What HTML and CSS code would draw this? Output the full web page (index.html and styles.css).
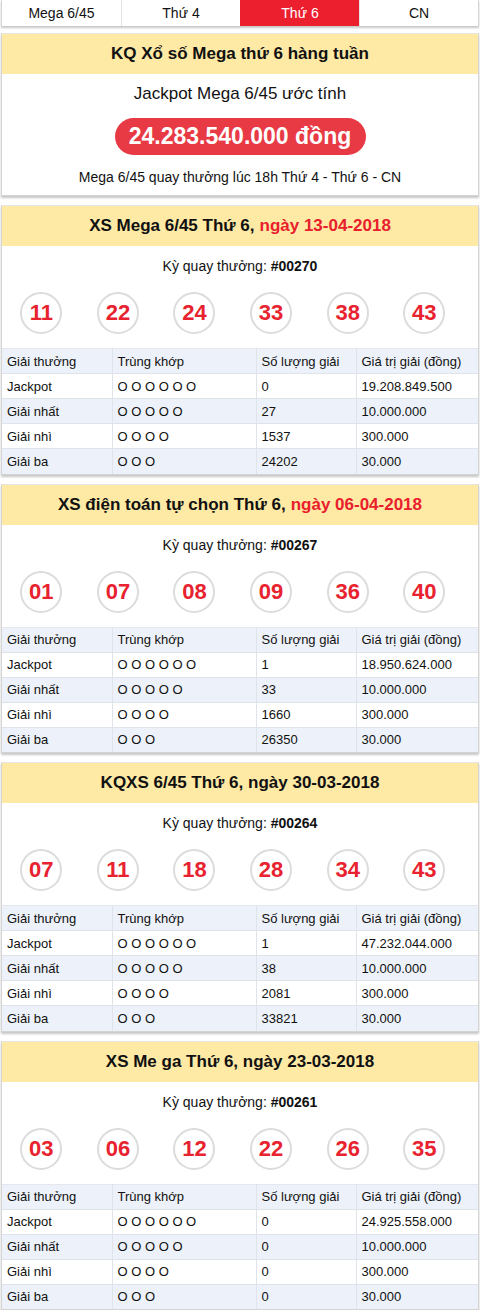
FILE: index.html
```html
<!DOCTYPE html>
<html lang="vi">
<head>
<meta charset="utf-8">
<title>Mega 6/45 Thứ 6</title>
<link rel="stylesheet" href="styles.css">
</head>
<body>
<nav class="tabs">
  <a class="tab">Mega 6/45</a>
  <a class="tab">Thứ 4</a>
  <a class="tab active">Thứ 6</a>
  <a class="tab">CN</a>
</nav>

<section class="card">
  <h2 class="card-title">KQ Xổ số Mega thứ 6 hàng tuần</h2>
  <div class="jackpot">
    <p class="jp-label">Jackpot Mega 6/45 ước tính</p>
    <div class="jp-pill">24.283.540.000 đồng</div>
    <p class="jp-note">Mega 6/45 quay thưởng lúc 18h Thứ 4 - Thứ 6 - CN</p>
  </div>
</section>

<section class="card">
  <h2 class="card-title">XS Mega 6/45 Thứ 6, <span class="date">ngày 13-04-2018</span></h2>
  <p class="draw">Kỳ quay thưởng: <b>#00270</b></p>
  <ul class="balls"><li>11</li><li>22</li><li>24</li><li>33</li><li>38</li><li>43</li></ul>
  <table class="prizes">
    <tr><th>Giải thưởng</th><th>Trùng khớp</th><th>Số lượng giải</th><th>Giá trị giải (đồng)</th></tr>
    <tr><td>Jackpot</td><td>O O O O O O</td><td>0</td><td>19.208.849.500</td></tr>
    <tr><td>Giải nhất</td><td>O O O O O</td><td>27</td><td>10.000.000</td></tr>
    <tr><td>Giải nhì</td><td>O O O O</td><td>1537</td><td>300.000</td></tr>
    <tr><td>Giải ba</td><td>O O O</td><td>24202</td><td>30.000</td></tr>
  </table>
</section>

<section class="card">
  <h2 class="card-title">XS điện toán tự chọn Thứ 6, <span class="date">ngày 06-04-2018</span></h2>
  <p class="draw">Kỳ quay thưởng: <b>#00267</b></p>
  <ul class="balls"><li>01</li><li>07</li><li>08</li><li>09</li><li>36</li><li>40</li></ul>
  <table class="prizes">
    <tr><th>Giải thưởng</th><th>Trùng khớp</th><th>Số lượng giải</th><th>Giá trị giải (đồng)</th></tr>
    <tr><td>Jackpot</td><td>O O O O O O</td><td>1</td><td>18.950.624.000</td></tr>
    <tr><td>Giải nhất</td><td>O O O O O</td><td>33</td><td>10.000.000</td></tr>
    <tr><td>Giải nhì</td><td>O O O O</td><td>1660</td><td>300.000</td></tr>
    <tr><td>Giải ba</td><td>O O O</td><td>26350</td><td>30.000</td></tr>
  </table>
</section>

<section class="card">
  <h2 class="card-title">KQXS 6/45 Thứ 6, ngày 30-03-2018</h2>
  <p class="draw">Kỳ quay thưởng: <b>#00264</b></p>
  <ul class="balls"><li>07</li><li>11</li><li>18</li><li>28</li><li>34</li><li>43</li></ul>
  <table class="prizes">
    <tr><th>Giải thưởng</th><th>Trùng khớp</th><th>Số lượng giải</th><th>Giá trị giải (đồng)</th></tr>
    <tr><td>Jackpot</td><td>O O O O O O</td><td>1</td><td>47.232.044.000</td></tr>
    <tr><td>Giải nhất</td><td>O O O O O</td><td>38</td><td>10.000.000</td></tr>
    <tr><td>Giải nhì</td><td>O O O O</td><td>2081</td><td>300.000</td></tr>
    <tr><td>Giải ba</td><td>O O O</td><td>33821</td><td>30.000</td></tr>
  </table>
</section>

<section class="card">
  <h2 class="card-title">XS Me ga Thứ 6, ngày 23-03-2018</h2>
  <p class="draw">Kỳ quay thưởng: <b>#00261</b></p>
  <ul class="balls"><li>03</li><li>06</li><li>12</li><li>22</li><li>26</li><li>35</li></ul>
  <table class="prizes">
    <tr><th>Giải thưởng</th><th>Trùng khớp</th><th>Số lượng giải</th><th>Giá trị giải (đồng)</th></tr>
    <tr><td>Jackpot</td><td>O O O O O O</td><td>0</td><td>24.925.558.000</td></tr>
    <tr><td>Giải nhất</td><td>O O O O O</td><td>0</td><td>10.000.000</td></tr>
    <tr><td>Giải nhì</td><td>O O O O</td><td>0</td><td>300.000</td></tr>
    <tr><td>Giải ba</td><td>O O O</td><td>0</td><td>30.000</td></tr>
  </table>
</section>
</body>
</html>
```

FILE: styles.css
```css
* { box-sizing: border-box; }
html, body { margin: 0; padding: 0; }
body {
  background: #fff;
  font-family: "Liberation Sans", Arial, sans-serif;
  color: #111;
  width: 480px;
}

.tabs {
  display: grid;
  grid-template-columns: repeat(4, 1fr);
  height: 26px;
  margin: 0 1px;
  border-left: 1px solid #d6d6d6;
  border-right: 1px solid #d6d6d6;
  box-shadow: 0 2px 2px rgba(0,0,0,0.22);
  background: #fff;
}
.tab {
  display: flex;
  align-items: center;
  justify-content: center;
  font-size: 14px;
  color: #111;
  border-left: 1px solid #e4e4e4;
}
.tab:first-child { border-left: none; }
.tab.active { background: #ec1f2f; color: #fff; border-left-color: #ec1f2f; }

.card {
  margin: 7px 1px 0;
  border: 1px solid #d4d4d4;
  border-top-color: #e6e6e6;
  box-shadow: 0 2px 2px rgba(0,0,0,0.22);
  background: #fff;
}
.card + .card { margin-top: 9px; }

.card-title {
  margin: 0;
  height: 40px;
  display: flex;
  align-items: center;
  justify-content: center;
  background: #fee9a5;
  font-size: 17px;
  font-weight: bold;
  color: #111;
}
.date { color: #e8202c; margin-left: 5px; }

.jackpot {
  display: flex;
  flex-direction: column;
  align-items: center;
  padding: 10px 0 9px;
}
.jp-label { margin: 0; font-size: 17px; line-height: 20px; }
.jp-pill {
  margin-top: 14px;
  width: 251px;
  height: 37px;
  border-radius: 19px;
  background: #e83a44;
  color: #fff;
  font-size: 23px;
  font-weight: bold;
  display: flex;
  align-items: center;
  justify-content: center;
}
.jp-note { margin: 14px 0 0; font-size: 14px; line-height: 17px; }

.draw {
  margin: 0;
  padding: 12px 0 0;
  text-align: center;
  font-size: 14px;
  line-height: 17px;
}

.balls {
  list-style: none;
  margin: 0;
  padding: 17px 0 14px 1px;
  display: grid;
  grid-template-columns: repeat(6, 76.6px);
}
.balls li {
  justify-self: center;
  width: 42px;
  height: 42px;
  border: 2px solid #dcdcdc;
  border-radius: 50%;
  display: flex;
  align-items: center;
  justify-content: center;
  color: #e8222e;
  font-size: 22px;
  font-weight: bold;
}

.prizes {
  width: 100%;
  border-collapse: collapse;
  font-size: 13px;
}
.prizes th, .prizes td {
  height: 25px;
  padding: 0 5px;
  text-align: left;
  font-weight: normal;
  border: 1px solid #dfe3ea;
  border-top: none;
}
.prizes tr > *:first-child { border-left: none; width: 110px; }
.prizes tr > *:nth-child(2) { width: 144px; }
.prizes tr > *:nth-child(3) { width: 100px; }
.prizes tr > *:last-child { border-right: none; }
.prizes tr:nth-child(odd) { background: #edf1f9; }
.prizes tr:nth-child(even) { background: #fff; }
.prizes tr:first-child > * { border-top: 1px solid #e4e8ee; }
.prizes tr:last-child > * { border-bottom: none; }
```
